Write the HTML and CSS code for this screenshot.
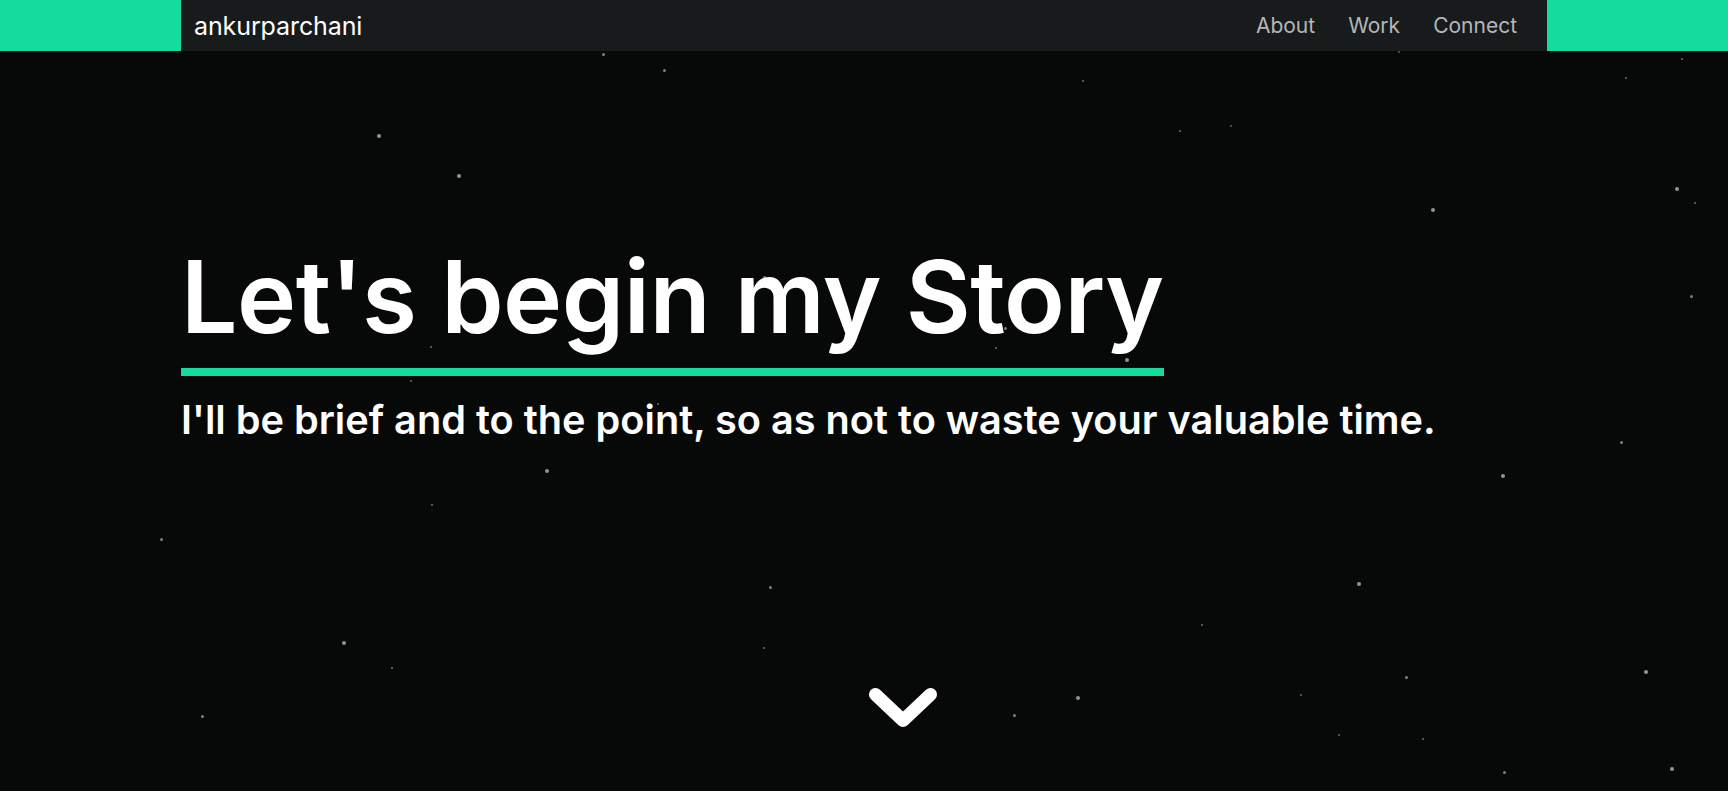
FILE: index.html
```html
<!DOCTYPE html>
<html lang="en">
<head>
<meta charset="utf-8">
<title>ankurparchani</title>
<link rel="stylesheet" href="styles.css">
</head>
<body>
<header class="topbar">
  <div class="topbar-inner">
    <a class="logo" href="#">ankurparchani</a>
    <nav class="nav">
      <a href="#about">About</a>
      <a href="#work">Work</a>
      <a href="#connect">Connect</a>
    </nav>
  </div>
</header>
<main class="hero">
  <div class="stars" aria-hidden="true">
    <span class="star s4" style="left:377px;top:83px"></span>
    <span class="star s4" style="left:457px;top:123px"></span>
    <span class="star s3" style="left:663px;top:18px"></span>
    <span class="star s3" style="left:602px;top:2px"></span>
    <span class="star s2" style="left:1082px;top:29px"></span>
    <span class="star s2" style="left:1179px;top:79px"></span>
    <span class="star s1" style="left:1230px;top:74px"></span>
    <span class="star s2" style="left:1625px;top:26px"></span>
    <span class="star s2" style="left:1681px;top:7px"></span>
    <span class="star s4" style="left:1431px;top:157px"></span>
    <span class="star s4" style="left:1675px;top:136px"></span>
    <span class="star s2" style="left:1694px;top:151px"></span>
    <span class="star s3" style="left:1690px;top:244px"></span>
    <span class="star s3" style="left:763px;top:225px"></span>
    <span class="star s3" style="left:1004px;top:276px"></span>
    <span class="star s2" style="left:995px;top:296px"></span>
    <span class="star s4" style="left:1125px;top:307px"></span>
    <span class="star s2" style="left:657px;top:352px"></span>
    <span class="star s2" style="left:430px;top:295px"></span>
    <span class="star s1" style="left:410px;top:329px"></span>
    <span class="star s3" style="left:1620px;top:390px"></span>
    <span class="star s4" style="left:1501px;top:423px"></span>
    <span class="star s4" style="left:545px;top:418px"></span>
    <span class="star s2" style="left:431px;top:453px"></span>
    <span class="star s3" style="left:160px;top:487px"></span>
    <span class="star s3" style="left:769px;top:535px"></span>
    <span class="star s4" style="left:1357px;top:531px"></span>
    <span class="star s2" style="left:1201px;top:573px"></span>
    <span class="star s4" style="left:342px;top:590px"></span>
    <span class="star s2" style="left:391px;top:616px"></span>
    <span class="star s3" style="left:1405px;top:625px"></span>
    <span class="star s4" style="left:1644px;top:619px"></span>
    <span class="star s2" style="left:763px;top:596px"></span>
    <span class="star s4" style="left:1076px;top:645px"></span>
    <span class="star s3" style="left:1013px;top:663px"></span>
    <span class="star s1" style="left:1300px;top:643px"></span>
    <span class="star s3" style="left:201px;top:664px"></span>
    <span class="star s2" style="left:1422px;top:687px"></span>
    <span class="star s4" style="left:1670px;top:716px"></span>
    <span class="star s3" style="left:1503px;top:720px"></span>
    <span class="star s1" style="left:1338px;top:683px"></span>
    <span class="star s1" style="left:1398px;top:0px"></span>
  </div>
  <div class="hero-inner">
    <h1 class="title">Let's begin my Story</h1>
    <p class="subtitle">I'll be brief and to the point, so as not to waste your valuable time.</p>
  </div>
  <a class="scroll-down" href="#about" aria-label="Scroll down">
    <svg width="70" height="40" viewBox="0 0 70 40">
      <polyline points="6.5,6.5 34,32.5 61.5,6.5" fill="none" stroke="#ffffff" stroke-width="13" stroke-linecap="round" stroke-linejoin="round"/>
    </svg>
  </a>
</main>
</body>
</html>
```

FILE: styles.css
```css
* {
  box-sizing: border-box;
}

html, body {
  margin: 0;
  padding: 0;
}

body {
  background: #070909;
  color: #ffffff;
  font-family: Inter, "Noto Sans", "Liberation Sans", sans-serif;
  overflow: hidden;
}

a {
  text-decoration: none;
  color: inherit;
}

.topbar {
  background: #16db9e;
  height: 51px;
  position: relative;
  z-index: 2;
}

.topbar-inner {
  width: 1366px;
  height: 51px;
  margin: 0 auto;
  background: #171b1c;
  display: flex;
  align-items: center;
  justify-content: space-between;
  padding: 0 30px 0 13px;
}

.logo {
  color: #ffffff;
  font-size: 25px;
  font-weight: 400;
  letter-spacing: -0.1px;
}

.nav {
  display: flex;
  gap: 33px;
}

.nav a {
  color: #b3b7bb;
  font-size: 21px;
  font-weight: 400;
}

.hero {
  position: relative;
  height: 740px;
}

.stars {
  position: absolute;
  inset: 0;
  pointer-events: none;
}

.star {
  position: absolute;
  border-radius: 50%;
  background: #8f9399;
}

.s1 { width: 1.5px; height: 1.5px; opacity: 0.6; }
.s2 { width: 2px; height: 2px; opacity: 0.75; }
.s3 { width: 3px; height: 3px; opacity: 0.85; }
.s4 { width: 4px; height: 4px; }

.hero-inner {
  position: relative;
  width: 1366px;
  margin: 0 auto;
  padding-top: 186px;
  display: flex;
  flex-direction: column;
  align-items: flex-start;
}

.title {
  margin: 0;
  font-size: 100px;
  line-height: 120px;
  font-weight: 600;
  letter-spacing: -0.5px;
  padding-bottom: 11px;
  border-bottom: 8px solid #16db9e;
}

.subtitle {
  margin: 20px 0 0;
  font-size: 39.7px;
  line-height: 48px;
  font-weight: 600;
}

.scroll-down {
  position: absolute;
  left: 869px;
  top: 637px;
  display: block;
  width: 70px;
  height: 40px;
}

.scroll-down svg {
  display: block;
}
```
